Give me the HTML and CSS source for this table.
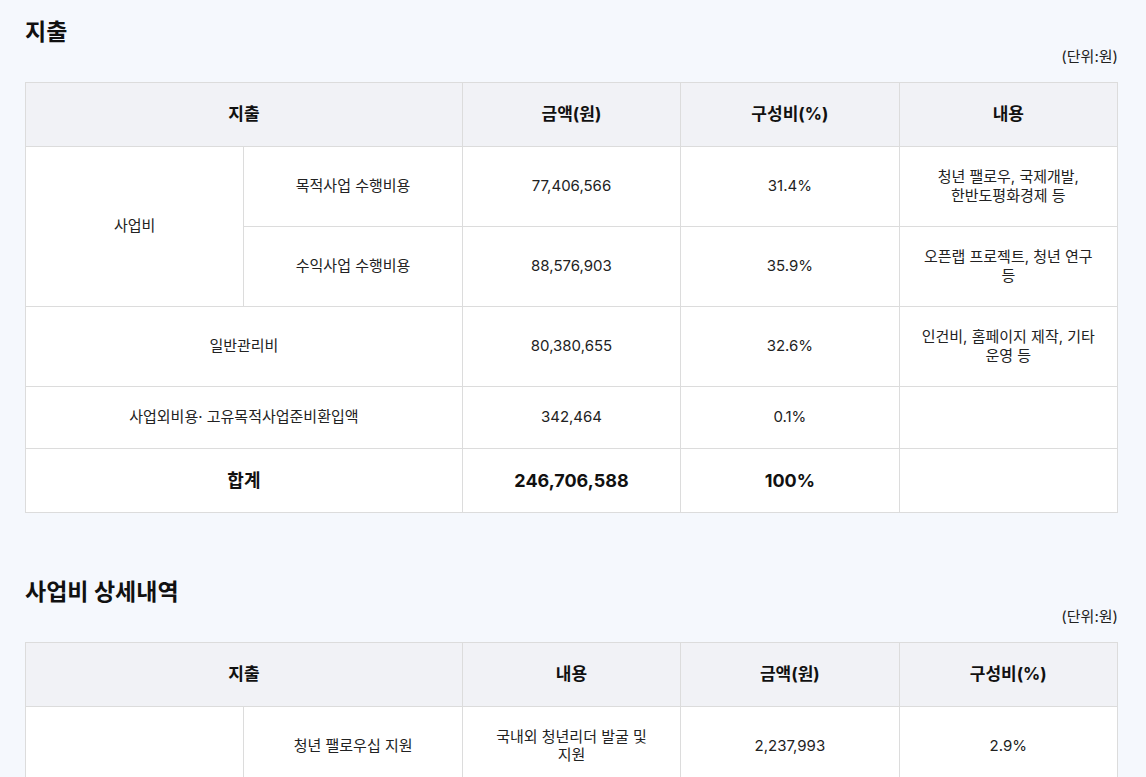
FILE: index.html
```html
<!DOCTYPE html>
<html lang="ko">
<head>
<meta charset="utf-8">
<link rel="stylesheet" href="styles.css">
</head>
<body>
<main class="page">
  <section class="section">
    <h2 class="title">지출</h2>
    <p class="unit">(단위:원)</p>
    <table class="tbl">
      <thead>
        <tr><th colspan="2">지출</th><th>금액(원)</th><th>구성비(%)</th><th>내용</th></tr>
      </thead>
      <tbody>
        <tr><td rowspan="2">사업비</td><td>목적사업 수행비용</td><td>77,406,566</td><td>31.4%</td><td class="desc">청년 팰로우, 국제개발,<br>한반도평화경제 등</td></tr>
        <tr><td>수익사업 수행비용</td><td>88,576,903</td><td>35.9%</td><td class="desc">오픈랩 프로젝트, 청년 연구 등</td></tr>
        <tr><td colspan="2">일반관리비</td><td>80,380,655</td><td>32.6%</td><td class="desc">인건비, 홈페이지 제작, 기타 운영 등</td></tr>
        <tr><td colspan="2">사업외비용· 고유목적사업준비환입액</td><td>342,464</td><td>0.1%</td><td></td></tr>
        <tr class="total"><td colspan="2">합계</td><td>246,706,588</td><td>100%</td><td></td></tr>
      </tbody>
    </table>
  </section>
  <section class="section">
    <h2 class="title">사업비 상세내역</h2>
    <p class="unit">(단위:원)</p>
    <table class="tbl">
      <thead>
        <tr><th colspan="2">지출</th><th>내용</th><th>금액(원)</th><th>구성비(%)</th></tr>
      </thead>
      <tbody>
        <tr><td rowspan="2"></td><td>청년 팰로우십 지원</td><td class="desc">국내외 청년리더 발굴 및 지원</td><td>2,237,993</td><td>2.9%</td></tr>
        <tr><td>청년 연구 지원</td><td class="desc">청년 연구 프로젝트 지원</td><td>1,000,000</td><td>1.3%</td></tr>
      </tbody>
    </table>
  </section>
</main>
</body>
</html>
```
FILE: styles.css
```css
html, body {
  margin: 0;
  padding: 0;
  background: #f5f8fd;
}
body {
  font-family: Inter, "Noto Sans CJK KR", sans-serif;
  color: #222;
}
.page {
  padding: 17px 28px 40px 25px;
}
.section + .section {
  margin-top: 64px;
}
.title {
  margin: 0;
  font-size: 23px;
  line-height: 30px;
  font-weight: 700;
  color: #111;
}
.unit {
  margin: 0 0 16px;
  text-align: right;
  font-size: 15px;
  line-height: 19px;
  color: #222;
}
.tbl {
  width: 100%;
  border-collapse: collapse;
  table-layout: fixed;
  background: #fff;
}
.tbl th, .tbl td {
  border: 1px solid #dcdcdc;
  text-align: center;
  vertical-align: middle;
  padding: 21px 24px;
  word-break: keep-all;
}
.tbl th {
  background: #f1f2f6;
  font-size: 17px;
  line-height: 21px;
  font-weight: 700;
  color: #111;
}
.tbl td {
  font-size: 15px;
  line-height: 18.5px;
  color: #222;
}
.tbl td.desc {
  padding-left: 22px;
  padding-right: 22px;
}
.tbl .total td {
  font-size: 18px;
  line-height: 21px;
  font-weight: 700;
  color: #111;
}
```
